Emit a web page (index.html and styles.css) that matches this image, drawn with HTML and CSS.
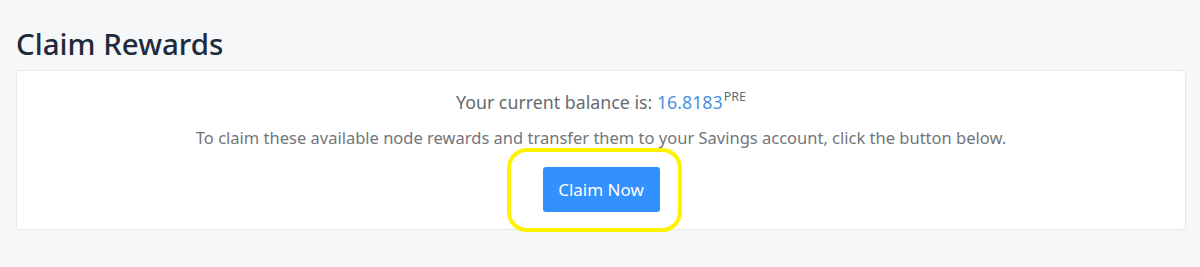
FILE: index.html
```html
<!DOCTYPE html>
<html>
<head>
<meta charset="utf-8">
<link rel="stylesheet" href="styles.css">
</head>
<body>
<div class="page">
  <h1 class="title">Claim Rewards</h1>
  <div class="card">
    <p class="balance">Your current balance is: <span class="amount">16.8183</span><sup class="unit">PRE</sup></p>
    <p class="info">To claim these available node rewards and transfer them to your Savings account, click the button below.</p>
    <div class="action">
      <button class="btn">Claim Now</button>
      <span class="highlight"></span>
    </div>
  </div>
</div>
</body>
</html>
```
FILE: styles.css
```css
html, body { margin: 0; padding: 0; }
body {
  background: #f5f7f9;
  font-family: "Noto Sans", "Open Sans", sans-serif;
  width: 1200px;
  height: 267px;
  overflow: hidden;
}
.page { padding: 26px 14px 0 16px; }
.title {
  margin: 0 0 8px 0;
  font-size: 29.5px;
  font-weight: 500;
  color: #1f2a3a;
  line-height: 36px;
}
.card {
  background: #fff;
  border: 1px solid #e6e9ec;
  border-radius: 4px;
  padding: 19px 0 17px;
  text-align: center;
}
.balance {
  margin: 0;
  font-size: 17.8px;
  line-height: 24px;
  color: #666b70;
}
.amount { color: #4a90e2; }
.unit { font-size: 12.5px; color: #666b70; vertical-align: top; position: relative; top: -5px; margin-left: 1px; }
.info {
  margin: 13px 0 18px;
  font-size: 16.5px;
  line-height: 22px;
  color: #71767b;
}
.action { position: relative; display: inline-block; vertical-align: top; }
.btn {
  font-family: inherit;
  background: #3390ff;
  color: #fff;
  border: 0;
  border-radius: 3px;
  font-size: 17px;
  width: 117px;
  height: 45px;
  display: block;
}
.highlight {
  position: absolute;
  left: -36px;
  top: -19px;
  width: 167px;
  height: 76px;
  border: 4px solid #fff200;
  border-radius: 20px;
  pointer-events: none;
}
```
